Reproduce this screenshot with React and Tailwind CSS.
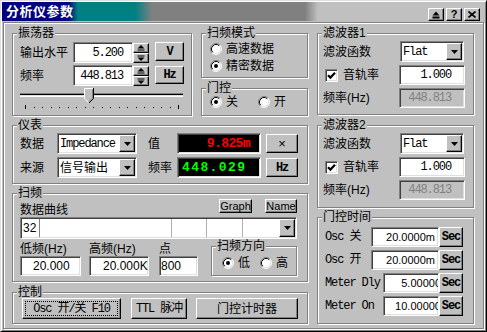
import React from "react";

const sunken =
  "border border-t-[#808080] border-l-[#808080] border-r-white border-b-white shadow-[inset_1px_1px_0_#404040,inset_-1px_-1px_0_#dfdfdf]";
const raised =
  "border border-t-white border-l-white border-r-black border-b-black shadow-[inset_-1px_-1px_0_#808080]";
const etched = "border border-[#808080] shadow-[inset_1px_1px_0_#fff,1px_1px_0_#fff]";
const mono = "font-['Liberation_Mono','Noto_Sans_CJK_SC',monospace] text-[12px] tracking-[-1.1px]";

const Group = ({ label, className = "", children }) => (
  <div className={`${etched} ${className}`}>
    <div className="-mt-[8px] h-[14px] pl-[4px] flex">
      <span className="bg-[#c0c0c0] px-[1px] h-[14px] leading-[14px]">{label}</span>
    </div>
    {children}
  </div>
);

const Btn = ({ className = "", children }) => (
  <button type="button" className={`flex items-center justify-center bg-[#c0c0c0] ${raised} ${className}`}>
    {children}
  </button>
);

const Radio = ({ checked }) => (
  <svg width="12" height="12" viewBox="0 0 12 12" className="shrink-0">
    <circle cx="6" cy="6" r="5" fill="#fff" />
    <path d="M2.11 9.89A5.5 5.5 0 0 1 9.89 2.11" fill="none" stroke="#808080" />
    <path d="M9.89 2.11A5.5 5.5 0 0 1 2.11 9.89" fill="none" stroke="#fff" />
    <path d="M2.82 9.18A4.5 4.5 0 0 1 9.18 2.82" fill="none" stroke="#000" />
    <path d="M9.18 2.82A4.5 4.5 0 0 1 2.82 9.18" fill="none" stroke="#dfdfdf" />
    {checked && <circle cx="6" cy="6" r="2" fill="#000" />}
  </svg>
);

const Check = () => (
  <div className={`w-[13px] h-[13px] shrink-0 bg-white ${sunken} flex items-center justify-center`}>
    <svg width="9" height="9" viewBox="0 0 9 9">
      <path d="M1 4.2L3.4 6.6L8 1.8" stroke="#000" strokeWidth="2.2" fill="none" />
    </svg>
  </div>
);

const DropBtn = () => (
  <div className={`w-[16px] shrink-0 bg-[#c0c0c0] ${raised} flex items-center justify-center`}>
    <svg width="7" height="4" viewBox="0 0 7 4">
      <path d="M0 0H7L3.5 4Z" fill="#000" />
    </svg>
  </div>
);

const Combo = ({ className = "", children }) => (
  <div className={`flex p-[1px] bg-white ${sunken} ${className}`}>
    <div className="flex-1 flex items-center pl-[1px] overflow-hidden whitespace-nowrap">{children}</div>
    <DropBtn />
  </div>
);

const SpinBtn = ({ up }) => (
  <div className={`h-[10px] bg-[#c0c0c0] ${raised} flex items-center justify-center`}>
    <svg width="8" height="6" viewBox="0 0 8 6">
      {up ? (
        <>
          <path d="M4 0L7.5 3.5H0.5Z" fill="#000" />
          <rect x="0.5" y="4.5" width="7" height="1" fill="#000" />
        </>
      ) : (
        <>
          <rect x="0.5" y="0.5" width="7" height="1" fill="#000" />
          <path d="M0.5 2.5H7.5L4 6Z" fill="#000" />
        </>
      )}
    </svg>
  </div>
);

const SpinField = ({ value }) => (
  <div className="flex">
    <div className={`w-[60px] h-[21px] bg-white ${sunken} flex items-center justify-end pr-[9px] ${mono}`}>
      {value}
    </div>
    <div className="flex flex-col w-[16px] h-[20px] mt-[1px]">
      <SpinBtn up />
      <SpinBtn />
    </div>
  </div>
);

const Slider = () => {
  const ticks = Array.from({ length: 19 }, (_, i) => Math.round(5 + i * 8.5));
  return (
    <svg width="170" height="22" viewBox="0 0 170 22" className="mt-[2px]">
      <rect x="0" y="5" width="163" height="1" fill="#808080" />
      <rect x="0" y="6" width="163" height="1" fill="#000" />
      <rect x="0" y="7" width="163" height="1" fill="#dfdfdf" />
      <rect x="0" y="8" width="163" height="1" fill="#fff" />
      <path d="M64 10V0H73V10L68.5 15Z" fill="#c0c0c0" />
      <path d="M64.5 10.5V0.5H73" fill="none" stroke="#fff" />
      <path d="M64.5 10.5L68.5 14.5" fill="none" stroke="#fff" />
      <path d="M73.5 0V10.5L69 15" fill="none" stroke="#000" />
      <path d="M72.5 1.5V10L68.8 13.7" fill="none" stroke="#808080" />
      {ticks.map((x, i) => (
        <rect
          key={x}
          x={x}
          y={i === 0 || i === ticks.length - 1 ? 17 : 19}
          width="1"
          height={i === 0 || i === ticks.length - 1 ? 4 : 1}
          fill="#000"
        />
      ))}
    </svg>
  );
};

const Led = ({ children, className = "" }) => (
  <div
    className={`w-[84px] h-[21px] bg-black ${sunken} flex items-center font-['Liberation_Mono',monospace] font-bold text-[13px] ${className}`}
  >
    {children}
  </div>
);

const Field = ({ label, value, className = "", w, textClass = "" }) => (
  <div className={`flex flex-col ${className}`}>
    <span className="h-[14px] leading-[14px]">{label}</span>
    <div className={`${w} h-[20px] bg-white ${sunken} flex items-center ${textClass}`}>{value}</div>
  </div>
);

const Filter = ({ label, className }) => (
  <Group label={label} className={className}>
    <div className="pl-[5px] mt-[1px] flex flex-col">
      <div className="flex items-center h-[21px]">
        <span className="w-[77px]">滤波函数</span>
        <Combo className="w-[64px] h-[21px]">
          <span className={mono}>Flat</span>
        </Combo>
      </div>
      <div className="flex items-center h-[20px] mt-[3px]">
        <div className="w-[76px] flex items-center pl-[2px]">
          <Check />
          <span className="ml-[5px]">音轨率</span>
        </div>
        <div className={`w-[66px] h-[20px] bg-white ${sunken} flex items-center justify-end pr-[13px] ${mono}`}>
          1.000
        </div>
      </div>
      <div className="flex items-center h-[20px] mt-[3px]">
        <span className="w-[76px]">频率(Hz)</span>
        <div
          className={`w-[66px] h-[20px] bg-[#c0c0c0] ${sunken} flex items-center justify-end pr-[13px] text-[#808080] ${mono}`}
        >
          448.813
        </div>
      </div>
    </div>
  </Group>
);

const GateRow = ({ label, value, w, clip }) => (
  <div className="flex items-center h-[20px]">
    <span className={`flex-1 ${mono}`}>{label}</span>
    <div
      className={`${w} h-[20px] bg-white ${sunken} flex items-center justify-end overflow-hidden pr-[3px] text-[11px] whitespace-nowrap`}
    >
      <span className={clip ? "-mr-[6px]" : ""}>{value}</span>
    </div>
    <Btn className={`w-[24px] h-[20px] font-bold ${mono}`}>Sec</Btn>
  </div>
);

export default function App() {
  return (
    <div className="w-[487px] h-[332px] bg-[#c0c0c0] border border-t-[#dfdfdf] border-l-[#dfdfdf] border-r-black border-b-black shadow-[inset_1px_1px_0_#fff,inset_-1px_-1px_0_#808080] p-[1px] flex flex-col font-['Liberation_Sans','Noto_Sans_CJK_SC',sans-serif] text-[12px] leading-[14px] text-black overflow-hidden">
      {/* title bar */}
      <div className="h-[19px] shrink-0 flex bg-[linear-gradient(90deg,#000080_66px,#008080_76px,#008080_133px,#808080_150px,#808080_303px,#c0c0c0_316px)]">
        <span className="pl-[4px] pt-[3px] text-white font-bold text-[13px] leading-[14px] tracking-[0.5px]">分析仪参数</span>
        <div className="ml-auto self-end flex gap-[2px] pr-[5px]">
          <Btn className="w-[16px] h-[13px]">
            <svg width="8" height="8" viewBox="0 0 8 8">
              <path d="M4 0.5L7.5 4.5H0.5Z" fill="#000" />
              <rect x="0.5" y="5.5" width="7" height="2" fill="#000" />
            </svg>
          </Btn>
          <Btn className="w-[16px] h-[13px] font-bold text-[11px] leading-[11px]">?</Btn>
          <Btn className="w-[16px] h-[13px]">
            <svg width="8" height="7" viewBox="0 0 8 7">
              <path d="M0.5 0.5L7.5 6.5M7.5 0.5L0.5 6.5" stroke="#000" strokeWidth="1.6" />
            </svg>
          </Btn>
        </div>
      </div>

      {/* client */}
      <div className="flex-1 p-[1px] flex">
        <div className={`flex-1 ${etched} pt-[10px] pl-[8px] pr-[9px] flex gap-[9px]`}>
          {/* left area */}
          <div className="w-[296px] flex flex-col">
            <div className="flex gap-[9px]">
              <Group label="振荡器" className="w-[180px] h-[83px]">
                <div className="pl-[7px] mt-[2px] flex flex-col">
                  <div className="flex items-start h-[21px]">
                    <span className="w-[53px] self-center">输出水平</span>
                    <SpinField value="5.200" />
                    <Btn className={`ml-[6px] w-[29px] h-[19px] font-bold ${mono}`}>V</Btn>
                  </div>
                  <div className="flex items-start h-[21px] mt-[2px]">
                    <span className="w-[53px] self-center">频率</span>
                    <SpinField value="448.813" />
                    <Btn className={`ml-[6px] mt-[1px] w-[29px] h-[18px] font-bold ${mono}`}>Hz</Btn>
                  </div>
                  <Slider />
                </div>
              </Group>

              <div className="w-[107px] flex flex-col">
                <Group label="扫频模式" className="h-[45px]">
                  <div className="pl-[8px] mt-[2px] flex flex-col gap-[3px]">
                    <div className="flex items-center gap-[4px] h-[14px]">
                      <Radio />
                      高速数据
                    </div>
                    <div className="flex items-center gap-[4px] h-[14px]">
                      <Radio checked />
                      精密数据
                    </div>
                  </div>
                </Group>
                <Group label="门控" className="h-[28px] mt-[10px]">
                  <div className="pl-[8px] flex h-[14px] items-center">
                    <div className="w-[48px] flex items-center gap-[4px]">
                      <Radio checked />关
                    </div>
                    <div className="flex items-center gap-[4px]">
                      <Radio />开
                    </div>
                  </div>
                </Group>
              </div>
            </div>

            <Group label="仪表" className="h-[59px] mt-[9px]">
              <div className="pl-[7px] mt-[1px] flex flex-col gap-[3px]">
                <div className="flex items-center h-[21px]">
                  <span className="w-[37px]">数据</span>
                  <Combo className="w-[80px] h-[21px]">
                    <span className={mono}>Impedance</span>
                  </Combo>
                  <span className="ml-[11px] w-[29px]">值</span>
                  <Led className="justify-end pr-[10px] text-[#ff0000] tracking-[-0.6px]">9.825m</Led>
                  <Btn className="ml-[5px] w-[32px] h-[19px] text-[13px]">×</Btn>
                </div>
                <div className="flex items-center h-[21px]">
                  <span className="w-[37px]">来源</span>
                  <Combo className="w-[80px] h-[21px]">
                    <span>信号输出</span>
                  </Combo>
                  <span className="ml-[11px] w-[29px]">频率</span>
                  <Led className="pl-[4px] text-[#00ff00] tracking-[1.4px]">448.029</Led>
                  <Btn className={`ml-[5px] w-[32px] h-[19px] font-bold ${mono}`}>Hz</Btn>
                </div>
              </div>
            </Group>

            <Group label="扫频" className="h-[89px] mt-[9px]">
              <div className="pl-[7px] pr-[10px] -mt-[1px]">
                <div className="flex h-[18px]">
                  <span className="self-end">数据曲线</span>
                  <Btn className="ml-auto w-[33px] h-[14px] text-[11px] leading-[11px]">Graph</Btn>
                  <Btn className="ml-[13px] w-[32px] h-[14px] text-[11px] leading-[11px]">Name</Btn>
                </div>
                <div className={`flex h-[22px] p-[1px] bg-white ${sunken}`}>
                  <div className="w-[18px] pl-[1px] flex items-center border-r border-[#808080]">32</div>
                  <div className="w-[132px] border-r border-[#b0b0b0]" />
                  <div className="w-[35px] border-r border-[#b0b0b0]" />
                  <div className="w-[36px] border-r border-[#b0b0b0]" />
                  <div className="flex-1" />
                  <DropBtn />
                </div>
                <div className="mt-[3px] flex">
                  <Field label="低频(Hz)" value="20.000" w="w-[61px]" textClass="pl-[12px]" />
                  <Field label="高频(Hz)" value="20.000K" w="w-[60px]" className="ml-[8px]" textClass="pl-[13px]" />
                  <Field label="点" value="800" w="w-[39px]" className="ml-[10px]" textClass="pl-[1px]" />
                  <Group label="扫频方向" className="ml-[13px] mt-[4px] w-[86px] h-[30px]">
                    <div className="pl-[10px] mt-[3px] flex items-center h-[14px]">
                      <div className="w-[38px] flex items-center gap-[4px]">
                        <Radio checked />低
                      </div>
                      <div className="flex items-center gap-[4px]">
                        <Radio />高
                      </div>
                    </div>
                  </Group>
                </div>
              </div>
            </Group>

            <Group label="控制" className="h-[32px] mt-[10px]">
              <div className="pl-[9px] -mt-[1px] flex">
                <Btn className={`w-[99px] h-[21px] p-[2px] ${mono}`}>
                  <span className="flex-1 self-stretch border border-dotted border-black flex items-center justify-center">
                    Osc 开/关 F10
                  </span>
                </Btn>
                <Btn className={`ml-[10px] w-[56px] h-[21px] ${mono}`}>TTL 脉冲</Btn>
                <Btn className="ml-[9px] w-[102px] h-[21px]">门控计时器</Btn>
              </div>
            </Group>
          </div>

          {/* right column */}
          <div className="w-[157px] flex flex-col">
            <Filter label="滤波器1" className="h-[82px]" />
            <Filter label="滤波器2" className="h-[83px] mt-[10px]" />
            <Group label="门控时间" className="h-[107px] mt-[9px]">
              <div className="pl-[7px] pr-[10px] mt-[3px] flex flex-col gap-[3px]">
                <GateRow label="Osc 关" value="20.0000m" w="w-[68px]" />
                <GateRow label="Osc 开" value="20.0000m" w="w-[68px]" />
                <GateRow label="Meter Dly" value="5.00000" w="w-[56px]" clip />
                <GateRow label="Meter On" value="10.00000" w="w-[56px]" clip />
              </div>
            </Group>
          </div>
        </div>
      </div>
    </div>
  );
}
